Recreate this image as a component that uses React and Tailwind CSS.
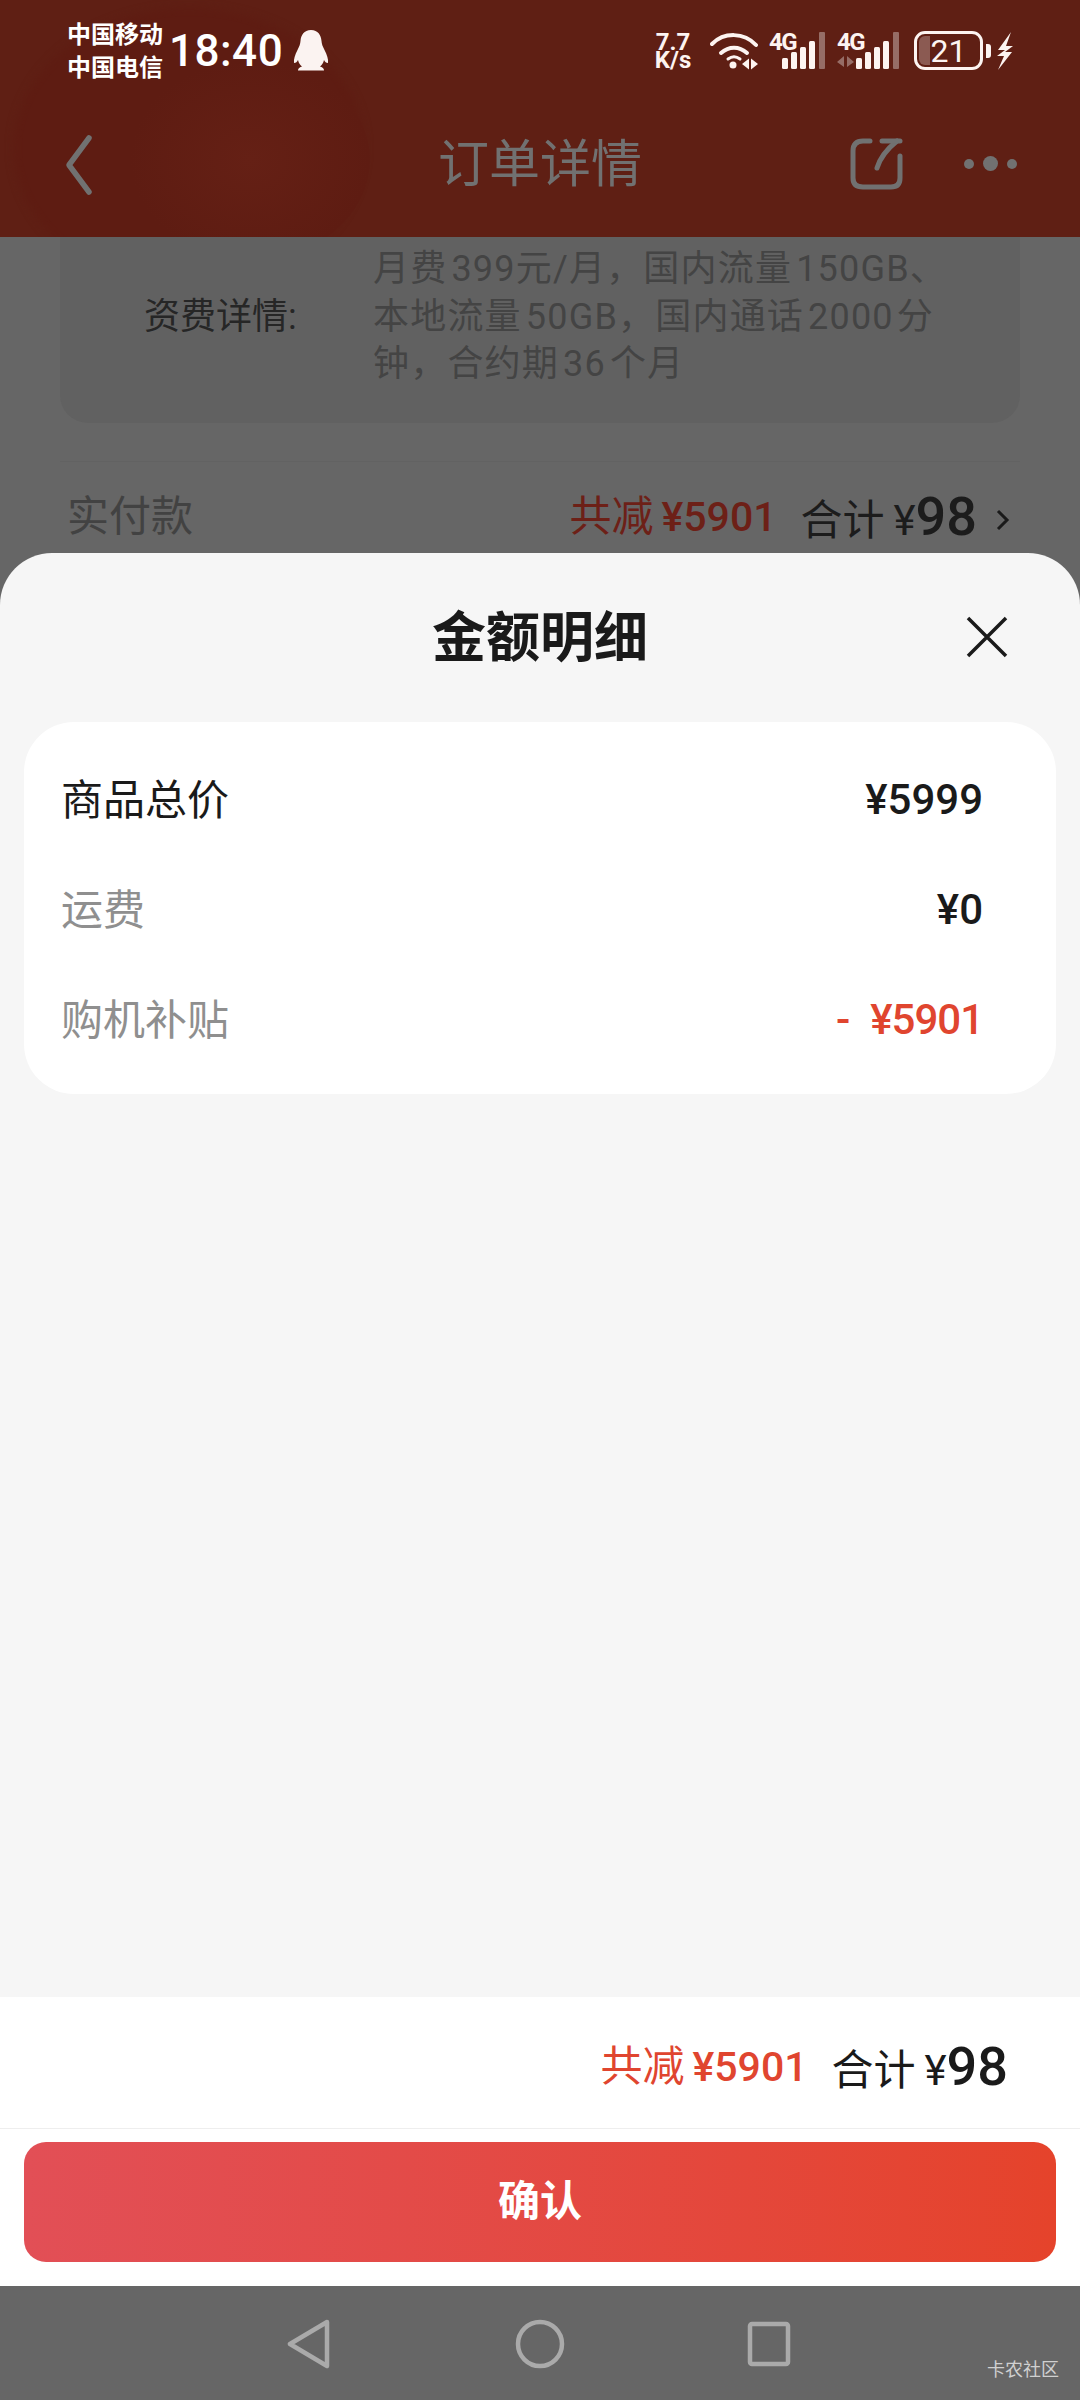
const cjk = { fontFamily: 'Roboto, "Noto Sans CJK SC", sans-serif' };

function Bars({ arrows }) {
  const off = arrows ? 6 : 0;
  const w = arrows ? 62 : 57;
  return (
    <div className="relative h-[38px] shrink-0" style={{ width: w }}>
      <span className="absolute left-0 top-[-3px] text-[24px] leading-[26px] font-bold text-[#fdf4f1] tracking-[-1.500px]">4G</span>
      <svg className="absolute left-0 top-0" width={w} height="38" viewBox={`0 0 ${w} 38`}>
        {arrows && <path d="M0 30l7-6v11zM10 24l7 6-7 5z" fill="#fff" fillOpacity="0.35" />}
        <rect x={13 + off} y="26" width="6" height="11" rx="1.500" fill="#fdf4f1" />
        <rect x={23 + off - 1} y="20" width="6" height="17" rx="1.500" fill="#fdf4f1" />
        <rect x={32 + off - 1} y="15" width="6" height="22" rx="1.500" fill="#fdf4f1" />
        <rect x={41 + off - 1} y="9" width="6" height="28" rx="1.500" fill="#fdf4f1" />
        <rect x={50 + off} y="0" width="6" height="37" rx="1" fill="#fff" fillOpacity="0.35" />
      </svg>
    </div>
  );
}

function StatusBar() {
  return (
    <div className="relative flex h-[100px] items-center pl-[67px] pr-[66px] pt-[1px] text-white">
      <div className="mt-[2px] w-[95px] shrink-0 whitespace-nowrap text-[24px] font-bold leading-[33px]">
        <div>中国移动</div>
        <div>中国电信</div>
      </div>
      <span className="ml-[7px] text-[44px] font-medium tracking-[0.5px] leading-none">18:40</span>
      <svg className="ml-[10px]" width="36" height="42" viewBox="0 0 36 42">
        <path d="M18 0c7 0 10 5 10.500 11 .2 3 1 5 3 9 2.500 5 4 9 3.500 13-2 0-3-1-4-3-.6 3-2 5-4 6.500 3 1 4 2 4 4H5c0-2 1-3 4-4-2-1.500-3.400-3.500-4-6.500-1 2-2 3-4 3-.5-4 1-8 3.500-13 2-4 2.800-6 3-9C8 5 11 0 18 0z" fill="#fbf3f1" />
      </svg>
      <div className="ml-auto flex items-center">
        <div className="w-[40px] whitespace-nowrap text-center text-[24px] font-bold leading-[18px] text-[#fdf4f1]">
          <div>7.7</div>
          <div>K/s</div>
        </div>
        <svg className="ml-[17px]" width="48" height="38" viewBox="0 0 48 38">
          <g fill="none" stroke="#fdf4f1" strokeLinecap="round">
            <path d="M2 12C14 0 34 0 46 13" strokeWidth="4" />
            <path d="M11 21c8-7 18-7 26 0" strokeWidth="4" />
            <path d="M18 27c4-3 8-3 12 0" strokeWidth="3" />
          </g>
          <circle cx="23" cy="33" r="3.500" fill="#fdf4f1" />
          <path d="M32 32l7-5.500v11zM41 26.500l7 5.500-7 5.500z" fill="#fdf4f1" />
        </svg>
        <div className="ml-[11px]"><Bars /></div>
        <div className="ml-[11px]"><Bars arrows /></div>
        <div className="relative ml-[15px] flex h-[39px] w-[69px] items-center justify-center rounded-[11px] border-[3.500px] border-[#fdf4f1]">
          <div className="absolute bottom-[2px] left-[2px] top-[2px] w-[11px] rounded-l-[6px] bg-[#8b5a52]" />
          <span className="relative text-[32px] leading-none text-[#fdf4f1]">21</span>
        </div>
        <div className="ml-[3px] h-[14px] w-[5px] rounded-r-[3px] bg-[#fdf4f1]" />
        <svg className="ml-[5px]" width="18" height="38" viewBox="0 0 18 38">
          <path d="M15 0L2 18h7L1 24h7L2 38 16 20H9l8-6h-7z" fill="#fdf4f1" />
        </svg>
      </div>
    </div>
  );
}

function Header() {
  return (
    <div className="relative h-[237px] shrink-0 overflow-hidden bg-[#5f1f14]">
      <div className="absolute left-[14px] top-[8px] h-[280px] w-[350px] rounded-[50%] bg-[#5e1c12] blur-[4px]" />
      <div className="absolute left-[130px] top-[60px] h-[200px] w-[240px] rounded-[50%] bg-[radial-gradient(closest-side,#652015,#5e1c12)]" />
      <div className="relative">
        <StatusBar />
        <div className="relative flex h-[137px] items-center justify-center">
          <svg className="absolute left-[62px] top-[33px]" width="34" height="64" viewBox="0 0 34 64">
            <path d="M27 5L7 32l20 27" fill="none" stroke="#717171" strokeWidth="5.500" strokeLinecap="round" strokeLinejoin="round" />
          </svg>
          <span className="mt-[-8px] text-[51px] leading-none text-[#717171]">订单详情</span>
          <svg className="absolute left-[848px] top-[35px]" width="58" height="58" viewBox="0 0 58 58">
            <path d="M22 6h-7C8 6 5 10 5 16v27c0 6 3 9 10 9h28c6 0 9-3 9-9V21" fill="none" stroke="#717171" strokeWidth="5" strokeLinecap="round" />
            <path d="M29 33c3-10 10-19 20-27" fill="none" stroke="#717171" strokeWidth="5" strokeLinecap="round" />
            <path d="M34 6h18" fill="none" stroke="#717171" strokeWidth="5" strokeLinecap="round" />
          </svg>
          <div className="absolute left-[964px] top-[56px] flex items-center gap-[9px]">
            <div className="h-[10px] w-[10px] rounded-full bg-[#717171]" />
            <div className="h-[15px] w-[15px] rounded-full bg-[#717171]" />
            <div className="h-[10px] w-[10px] rounded-full bg-[#717171]" />
          </div>
        </div>
      </div>
    </div>
  );
}

function Backdrop() {
  return (
    <div className="h-[316px] shrink-0 overflow-hidden bg-[#666666] px-[60px]">
      <div className="flex h-[186px] rounded-b-[28px] bg-[#616161]">
        <div className="w-[313px] shrink-0 whitespace-nowrap pl-[84px] pt-[56px] text-[36px] leading-[48px] text-[#262626]">资费详情:</div>
        <div className="shrink-0 whitespace-nowrap pt-[9px] text-[36px] leading-[47.500px] tracking-[1.200px] text-[#444444]">
          <div>月费<span className="ml-[4px]">399</span>元/月，国内流量<span className="ml-[4px]">150GB、</span></div>
          <div>本地流量<span className="ml-[4px]">50GB</span>，国内通话<span className="ml-[4px]">2000</span><span className="ml-[3px]">分</span></div>
          <div>钟，合约期<span className="ml-[4px]">36</span><span className="ml-[4px]">个月</span></div>
        </div>
      </div>
      <div className="mt-[38px] h-[1px] bg-[#626262]" />
      <div className="flex h-[92px] items-center pl-[7px] pr-[10px] pt-[18px]">
        <span className="text-[42px] leading-none text-[#424242]">实付款</span>
        <span className="ml-auto text-[42px] leading-none text-[#6d2017]">
          共减<span className="ml-[8px] text-[41px] font-medium">¥5901</span>
        </span>
        <span className="ml-[24px] text-[42px] leading-none text-[#1c1c1c]">合计<span className="ml-[9px]">¥</span><span className="text-[54px] font-medium">98</span></span>
        <svg className="ml-[19px] mt-[6px]" width="14" height="26" viewBox="0 0 14 26">
          <path d="M2 4l9 9-9 9" fill="none" stroke="#1a1a1a" strokeWidth="3" />
        </svg>
      </div>
    </div>
  );
}

function Row({ label, children, labelClass, valueClass }) {
  return (
    <div className="flex h-[110px] items-center justify-between">
      <span className={`text-[42px] leading-none ${labelClass}`}>{label}</span>
      <span className={`mb-[3px] whitespace-nowrap text-[42px] font-medium leading-none ${valueClass}`}>{children}</span>
    </div>
  );
}

function Sheet() {
  return (
    <div className="flex h-[1733px] shrink-0 flex-col overflow-hidden rounded-t-[52px] bg-[#f6f6f6]">
      <div className="relative flex h-[169px] shrink-0 items-center justify-center">
        <span className="mt-[2px] text-[54px] font-bold leading-none text-[#1a1a1a]">金额明细</span>
        <svg className="absolute left-[966px] top-[63px]" width="42" height="42" viewBox="0 0 42 42">
          <path d="M2 2l38 38M40 2L2 40" fill="none" stroke="#1a1a1a" strokeWidth="3.500" />
        </svg>
      </div>
      <div className="mx-[24px] h-[372px] shrink-0 rounded-[50px] bg-white pl-[37px] pr-[73px] pt-[24px]">
        <Row label="商品总价" labelClass="text-[#1a1a1a]" valueClass="text-[#1a1a1a]">¥5999</Row>
        <Row label="运费" labelClass="text-[#8f8f8f]" valueClass="text-[#1a1a1a]">¥0</Row>
        <Row label="购机补贴" labelClass="text-[#8f8f8f]" valueClass="tracking-[-1px] text-[#e0452f]">-<span className="ml-[21px]">¥5901</span></Row>
      </div>
      <div className="flex-1" />
      <div className="shrink-0 bg-white">
        <div className="flex h-[132px] items-center justify-end border-b border-[#eeeeee] pr-[72px] pt-[8px]">
          <span className="text-[42px] leading-none text-[#e0452f]">
            共减<span className="ml-[8px] text-[41px] font-medium">¥5901</span>
          </span>
          <span className="ml-[24px] text-[42px] leading-none text-[#1a1a1a]">
            合计<span className="ml-[9px]">¥</span><span className="text-[54px] font-medium">98</span>
          </span>
        </div>
        <div className="px-[24px] pb-[24px] pt-[13px]">
          <div className="flex h-[120px] items-center justify-center rounded-[22px] bg-gradient-to-r from-[#e24f56] to-[#e5432b]">
            <span className="text-[42px] font-bold leading-none text-white">确认</span>
          </div>
        </div>
      </div>
    </div>
  );
}

function NavBar() {
  return (
    <div className="relative flex h-[114px] shrink-0 justify-center bg-[#666666] pt-[33px]">
      <svg className="absolute left-[286px] top-[33px]" width="46" height="50" viewBox="0 0 46 50">
        <path d="M41 3L4 25l37 22z" fill="none" stroke="#aaaaaa" strokeWidth="4.500" strokeLinejoin="round" />
      </svg>
      <svg className="absolute left-[514px] top-[33px]" width="52" height="50" viewBox="0 0 52 50">
        <circle cx="26" cy="25" r="22" fill="none" stroke="#aaaaaa" strokeWidth="4.500" />
      </svg>
      <svg className="absolute left-[746px] top-[34px]" width="46" height="48" viewBox="0 0 46 48">
        <rect x="4" y="4" width="38" height="40" rx="2" fill="none" stroke="#aaaaaa" strokeWidth="4.500" />
      </svg>
      <span className="absolute left-[987px] top-[73px] whitespace-nowrap text-[18px] leading-[22px] text-[#d0d0d0]">卡农社区</span>
    </div>
  );
}

export default function App() {
  return (
    <div className="flex h-[2400px] w-[1080px] flex-col overflow-hidden bg-[#666666]" style={cjk}>
      <Header />
      <Backdrop />
      <Sheet />
      <NavBar />
    </div>
  );
}
